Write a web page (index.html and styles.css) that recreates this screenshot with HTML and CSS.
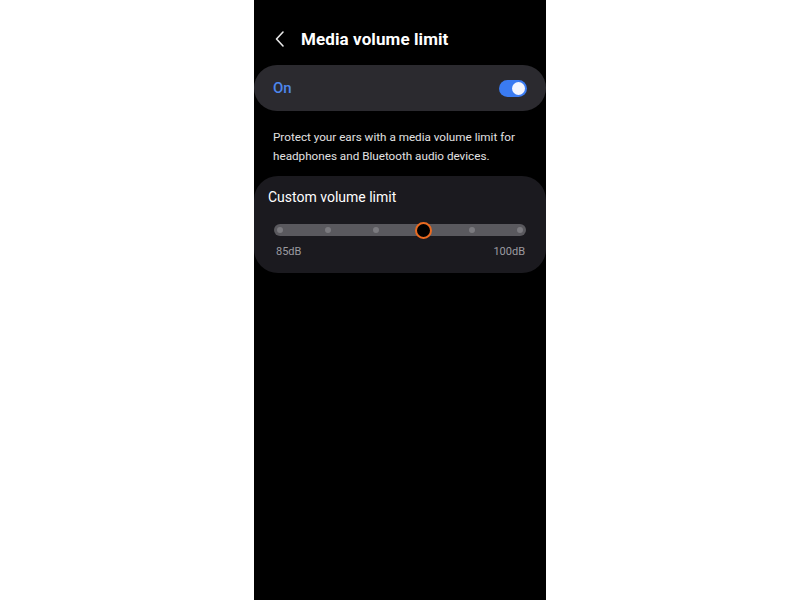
FILE: index.html
```html
<!DOCTYPE html>
<html lang="en">

<head>
    <meta charset="UTF-8">
    <meta name="viewport" content="width=device-width, initial-scale=1.0">
    <title>Media volume limit</title>
    <link rel="stylesheet" href="styles.css">
</head>

<body>
    <div class="phone">
        <div class="header">
            <svg class="back" width="12" height="18" viewBox="0 0 12 18">
                <path d="M9 2 L2.5 9 L9 16" fill="none" stroke="#e8e8e8" stroke-width="1.6" stroke-linecap="round" stroke-linejoin="round" />
            </svg>
            <span class="title">Media volume limit</span>
        </div>

        <div class="switch-card">
            <span class="state">On</span>
            <div class="toggle">
                <div class="knob"></div>
            </div>
        </div>

        <p class="desc">Protect your ears with a media volume limit for headphones and Bluetooth audio devices.</p>

        <div class="limit-card">
            <div class="limit-title">Custom volume limit</div>
            <div class="slider">
                <span class="dot"></span>
                <span class="dot"></span>
                <span class="dot"></span>
                <span class="dot thumb"></span>
                <span class="dot"></span>
                <span class="dot"></span>
            </div>
            <div class="labels">
                <span>85dB</span>
                <span>100dB</span>
            </div>
        </div>
    </div>
</body>

</html>
```

FILE: styles.css
```css
* {
    margin: 0;
    padding: 0;
    box-sizing: border-box;
}

body {
    background: #fff;
    font-family: Roboto, "Noto Sans", sans-serif;
}

.phone {
    width: 292px;
    height: 600px;
    margin: 0 auto;
    padding-top: 28px;
    background: #000;
    color: #fff;
}

.header {
    display: flex;
    align-items: center;
    height: 22px;
    padding-left: 20px;
}

.back {
    margin-right: 15px;
}

.title {
    font-size: 17px;
    font-weight: 700;
    letter-spacing: 0.1px;
}

.switch-card {
    display: flex;
    align-items: center;
    justify-content: space-between;
    height: 46px;
    margin-top: 15px;
    padding: 0 19px;
    border-radius: 23px;
    background: #2b2a2f;
}

.state {
    color: #4d86ec;
    font-size: 15px;
    font-weight: 500;
}

.toggle {
    display: flex;
    align-items: center;
    justify-content: flex-end;
    width: 28px;
    height: 17px;
    padding-right: 2px;
    border-radius: 9px;
    background: #3a7bf2;
}

.knob {
    width: 13px;
    height: 13px;
    border-radius: 50%;
    background: #f4f6ff;
}

.desc {
    height: 53px;
    padding: 17px 19px 0;
    font-size: 11.7px;
    line-height: 19px;
    color: #e2e2e2;
}

.limit-card {
    height: 97px;
    margin-top: 12px;
    padding: 12px 20px 0 14px;
    border-radius: 24px;
    background: #1b1a1f;
}

.limit-title {
    font-size: 14px;
    line-height: 18px;
}

.slider {
    display: flex;
    align-items: center;
    justify-content: space-between;
    height: 12px;
    margin: 18px 0 0 6px;
    padding: 0 3px;
    border-radius: 6px;
    background: #5a595e;
}

.dot {
    width: 6px;
    height: 6px;
    border-radius: 50%;
    background: #7b7a7f;
}

.dot.thumb {
    width: 17px;
    height: 17px;
    margin: 0 -5px;
    border: 2px solid #ea6a20;
    background: #000;
}

.labels {
    display: flex;
    justify-content: space-between;
    margin: 9px 1px 0 8px;
    font-size: 11px;
    color: #9c9ba0;
}
```
